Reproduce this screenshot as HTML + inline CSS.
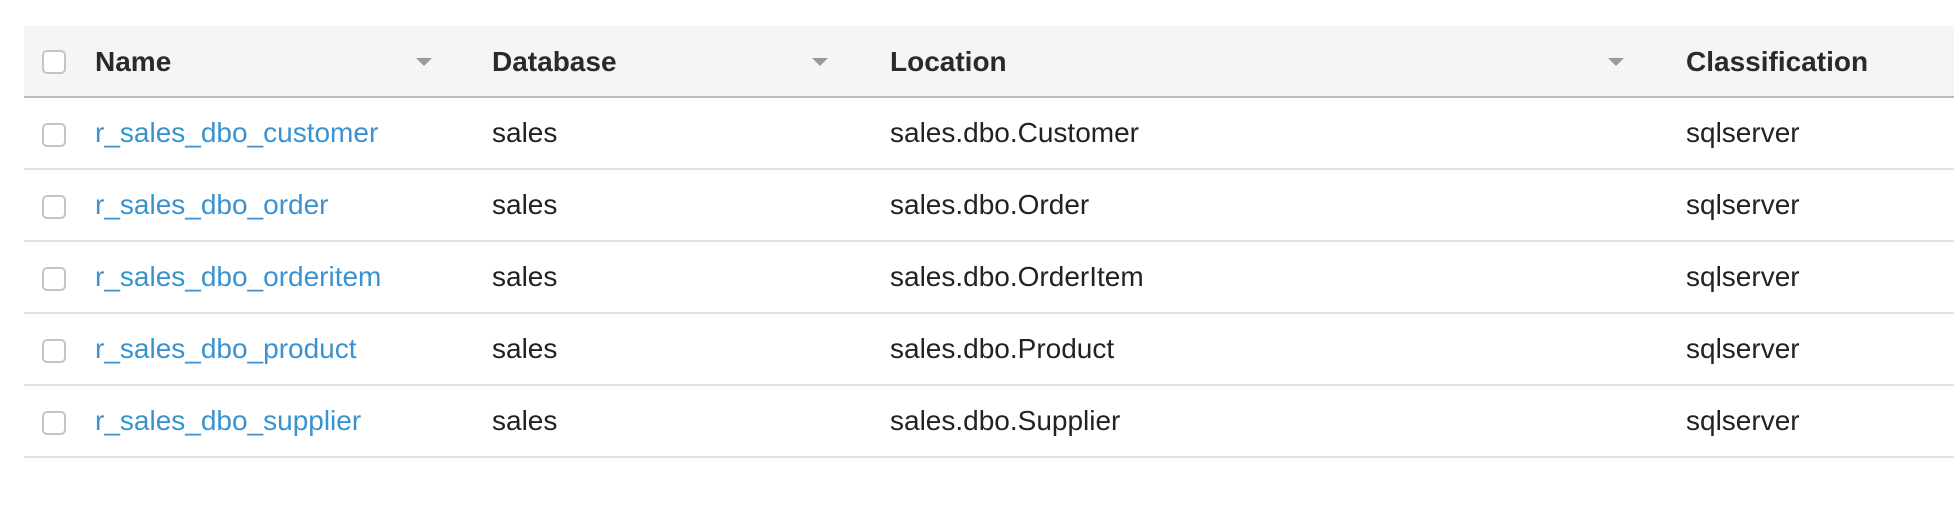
<!DOCTYPE html>
<html><head><style>
body{margin:0;width:1954px;height:518px;background:#fff;font-family:"Liberation Sans",Arial,sans-serif;position:relative;overflow:hidden}
.hdr{position:absolute;left:24px;top:26px;width:1930px;height:70px;background:#f5f5f5;border-bottom:2px solid #bbb}
.row{position:absolute;left:24px;width:1930px;height:70px;border-bottom:2px solid #e2e2e2}
.cb{position:absolute;left:18px;top:25px;width:20px;height:20px;border:2px solid #c4c4c4;border-radius:5px;background:#fff}
.t{position:absolute;top:0;line-height:70px;font-size:28px;color:#222;white-space:nowrap}
.hdr .t{font-weight:bold;color:#2a2a2a;line-height:72px}
.a{color:#3a93cf}
.arr{position:absolute;top:32px;width:0;height:0;border-left:8px solid transparent;border-right:8px solid transparent;border-top:8px solid #999}
</style></head><body>
<div class="hdr"><div class="cb" style="top:24px"></div>
<div class="t" style="left:71px">Name</div><div class="arr" style="left:392px"></div>
<div class="t" style="left:468px">Database</div><div class="arr" style="left:788px"></div>
<div class="t" style="left:866px">Location</div><div class="arr" style="left:1584px"></div>
<div class="t" style="left:1662px">Classification</div></div>

<div class="row" style="top:98px"><div class="cb"></div><div class="t a" style="left:71px">r_sales_dbo_customer</div><div class="t" style="left:468px">sales</div><div class="t" style="left:866px">sales.dbo.Customer</div><div class="t" style="left:1662px">sqlserver</div></div>
<div class="row" style="top:170px"><div class="cb"></div><div class="t a" style="left:71px">r_sales_dbo_order</div><div class="t" style="left:468px">sales</div><div class="t" style="left:866px">sales.dbo.Order</div><div class="t" style="left:1662px">sqlserver</div></div>
<div class="row" style="top:242px"><div class="cb"></div><div class="t a" style="left:71px">r_sales_dbo_orderitem</div><div class="t" style="left:468px">sales</div><div class="t" style="left:866px">sales.dbo.OrderItem</div><div class="t" style="left:1662px">sqlserver</div></div>
<div class="row" style="top:314px"><div class="cb"></div><div class="t a" style="left:71px">r_sales_dbo_product</div><div class="t" style="left:468px">sales</div><div class="t" style="left:866px">sales.dbo.Product</div><div class="t" style="left:1662px">sqlserver</div></div>
<div class="row" style="top:386px"><div class="cb"></div><div class="t a" style="left:71px">r_sales_dbo_supplier</div><div class="t" style="left:468px">sales</div><div class="t" style="left:866px">sales.dbo.Supplier</div><div class="t" style="left:1662px">sqlserver</div></div>
</body></html>
